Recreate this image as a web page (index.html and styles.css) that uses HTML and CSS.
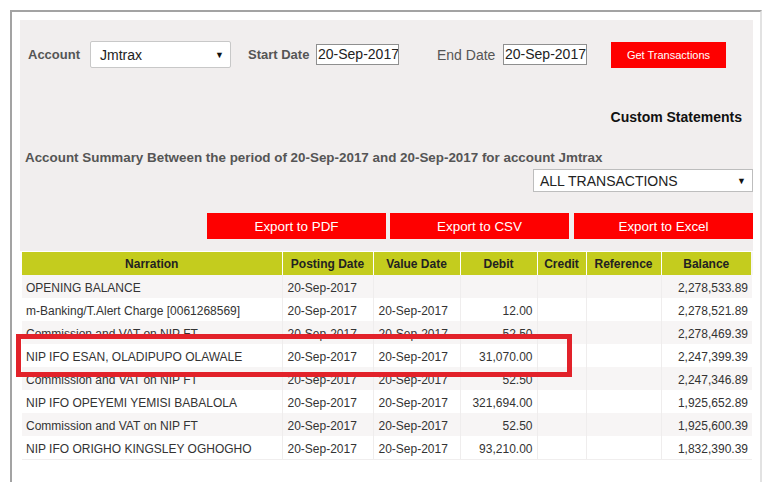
FILE: index.html
```html
<!DOCTYPE html>
<html>
<head>
<meta charset="utf-8">
<link rel="stylesheet" href="styles.css">
</head>
<body>
<div class="frame">
  <div class="panel">
    <div class="filters">
      <span class="lbl lbl-account">Account</span>
      <div class="select select-account"><span>Jmtrax</span><span class="arrow">&#9660;</span></div>
      <span class="lbl lbl-start">Start Date</span>
      <div class="date">20-Sep-2017</div>
      <span class="lbl lbl-end">End Date</span>
      <div class="date date-end">20-Sep-2017</div>
      <button class="btn-get">Get Transactions</button>
    </div>
    <div class="custom">Custom Statements</div>
    <div class="summary">Account Summary Between the period of 20-Sep-2017 and 20-Sep-2017 for account Jmtrax</div>
    <div class="type-row">
      <div class="select select-type"><span>ALL TRANSACTIONS</span><span class="arrow">&#9660;</span></div>
    </div>
    <div class="exports">
      <button class="btn-export">Export to PDF</button>
      <button class="btn-export">Export to CSV</button>
      <button class="btn-export btn-excel">Export to Excel</button>
    </div>
  </div>
  <div class="table-wrap">
    <table class="tx">
      <colgroup>
        <col class="c-narr"><col class="c-post"><col class="c-val"><col class="c-deb"><col class="c-cred"><col class="c-ref"><col class="c-bal">
      </colgroup>
      <thead>
        <tr><th>Narration</th><th>Posting Date</th><th>Value Date</th><th>Debit</th><th>Credit</th><th>Reference</th><th>Balance</th></tr>
      </thead>
      <tbody>
        <tr><td>OPENING BALANCE</td><td>20-Sep-2017</td><td></td><td class="num"></td><td></td><td></td><td class="num">2,278,533.89</td></tr>
        <tr><td>m-Banking/T.Alert Charge [0061268569]</td><td>20-Sep-2017</td><td>20-Sep-2017</td><td class="num">12.00</td><td></td><td></td><td class="num">2,278,521.89</td></tr>
        <tr><td>Commission and VAT on NIP FT</td><td>20-Sep-2017</td><td>20-Sep-2017</td><td class="num">52.50</td><td></td><td></td><td class="num">2,278,469.39</td></tr>
        <tr><td>NIP IFO ESAN, OLADIPUPO OLAWALE</td><td>20-Sep-2017</td><td>20-Sep-2017</td><td class="num">31,070.00</td><td></td><td></td><td class="num">2,247,399.39</td></tr>
        <tr><td>Commission and VAT on NIP FT</td><td>20-Sep-2017</td><td>20-Sep-2017</td><td class="num">52.50</td><td></td><td></td><td class="num">2,247,346.89</td></tr>
        <tr><td>NIP IFO OPEYEMI YEMISI BABALOLA</td><td>20-Sep-2017</td><td>20-Sep-2017</td><td class="num">321,694.00</td><td></td><td></td><td class="num">1,925,652.89</td></tr>
        <tr><td>Commission and VAT on NIP FT</td><td>20-Sep-2017</td><td>20-Sep-2017</td><td class="num">52.50</td><td></td><td></td><td class="num">1,925,600.39</td></tr>
        <tr><td>NIP IFO ORIGHO KINGSLEY OGHOGHO</td><td>20-Sep-2017</td><td>20-Sep-2017</td><td class="num">93,210.00</td><td></td><td></td><td class="num">1,832,390.39</td></tr>
      </tbody>
    </table>
  </div>
</div>
<div class="highlight"></div>
</body>
</html>
```

FILE: styles.css
```css
html, body {
  margin: 0;
  padding: 0;
  background: #fff;
  font-family: "Liberation Sans", Arial, sans-serif;
  width: 766px;
  height: 482px;
  overflow: hidden;
}
body { position: relative; }

.frame {
  margin: 10px 0 0 10px;
  width: 748px;
  height: 480px;
  border-top: 2px solid #a3a3a3;
  border-left: 2px solid #a3a3a3;
  border-right: 2px solid #e2e2e2;
  padding-top: 8px;
  box-sizing: content-box;
}

.panel {
  margin-left: 8px;
  width: 733px;
  background: #f1eeee;
  padding: 21px 0 12px 8px;
  box-sizing: border-box;
}

.filters {
  display: flex;
  align-items: center;
  height: 27px;
}
.filters > * { flex-shrink: 0; white-space: nowrap; }
.lbl {
  font-size: 13px;
  color: #555;
  font-weight: bold;
}
.lbl-account { width: 62px; }
.lbl-start { margin-left: 17px; width: 68px; }
.lbl-end { margin-left: 38px; width: 66px; font-weight: normal; font-size: 14px; }

.select {
  display: flex;
  align-items: center;
  justify-content: space-between;
  background: #fff;
  border: 1px solid #c8c8c8;
  border-radius: 2px;
  box-sizing: border-box;
  font-size: 14px;
  color: #222;
}
.select .arrow { font-size: 9px; color: #111; }
.select-account {
  width: 141px;
  height: 27px;
  padding: 0 6px 0 9px;
}

.date {
  width: 83px;
  height: 21px;
  box-sizing: border-box;
  border: 1px solid #8f8f8f;
  background: #fff;
  font-size: 14px;
  color: #222;
  line-height: 19px;
  padding-left: 1px;
  overflow: hidden;
}
.date-end { width: 84px; }

.btn-get {
  margin-left: 24px;
  width: 115px;
  height: 26px;
  border: none;
  background: #fe0000;
  color: #fff;
  font-family: "Liberation Sans", Arial, sans-serif;
  font-size: 11px;
  padding: 0;
}

.custom {
  margin-top: 40px;
  text-align: right;
  padding-right: 11px;
  font-size: 14px;
  font-weight: bold;
  color: #111;
  line-height: 18px;
}

.summary {
  margin-top: 24px;
  margin-left: -3px;
  font-size: 13.4px;
  font-weight: bold;
  color: #555;
  line-height: 16px;
  white-space: nowrap;
}

.type-row {
  display: flex;
  justify-content: flex-end;
  margin-top: 3px;
}
.select-type {
  width: 220px;
  height: 23px;
  padding: 0 6px 0 6px;
  border-color: #bdbdbd;
  border-radius: 0;
}

.exports {
  display: flex;
  justify-content: flex-end;
  gap: 4px;
  margin-top: 21px;
}
.btn-export {
  width: 179px;
  height: 26px;
  border: none;
  background: #fe0000;
  color: #fff;
  font-family: "Liberation Sans", Arial, sans-serif;
  font-size: 13.4px;
  padding: 0;
}
.btn-excel { margin-left: 1px; }

.table-wrap {
  margin: 1px 0 0 10px;
  width: 730px;
}
.tx {
  width: 730px;
  border-collapse: collapse;
  table-layout: fixed;
  font-size: 12px;
  color: #333;
}
.c-narr { width: 260px; }
.c-post { width: 91px; }
.c-val { width: 87px; }
.c-deb { width: 77px; }
.c-cred { width: 49px; }
.c-ref { width: 75px; }
.c-bal { width: 91px; }

.tx th {
  background: #c4cc1e;
  color: #222;
  font-weight: bold;
  font-size: 12px;
  height: 23px;
  padding: 0;
  border-left: 1px solid #fff;
  text-align: center;
}
.tx th:first-child { border-left: none; }
.tx th:last-child { border-right: 2px solid #f7f5f5; }
.tx td {
  height: 21px;
  padding: 2px 4px 0 5px;
  border-left: 1px solid #efeded;
  white-space: nowrap;
  overflow: hidden;
}
.tx td:first-child { border-left: none; padding-left: 4px; }
.tx td.num { text-align: right; }
.tx tbody tr:nth-child(odd) { background: #f7f5f5; }
.tx tbody tr:nth-child(even) { background: #fff; }
.tx tbody tr:last-child td { border-bottom: 1px solid #f0eeee; }

.highlight {
  position: absolute;
  left: 16px;
  top: 334px;
  width: 556px;
  height: 43px;
  border: 5px solid #e2222a;
  box-sizing: border-box;
}
```
